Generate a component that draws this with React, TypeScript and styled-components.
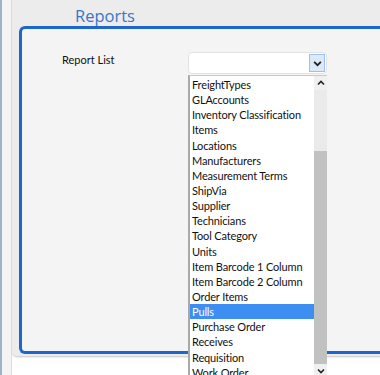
import React from 'react';
import styled, { createGlobalStyle } from 'styled-components';

const reports = [
  'FreightTypes',
  'GLAccounts',
  'Inventory Classification',
  'Items',
  'Locations',
  'Manufacturers',
  'Measurement Terms',
  'ShipVia',
  'Supplier',
  'Technicians',
  'Tool Category',
  'Units',
  'Item Barcode 1 Column',
  'Item Barcode 2 Column',
  'Order Items',
  'Pulls',
  'Purchase Order',
  'Receives',
  'Requisition',
  'Work Order',
];

const GlobalStyle = createGlobalStyle`
  html, body {
    margin: 0;
    padding: 0;
    background: #ffffff;
    overflow: hidden;
  }
  body {
    font-family: Lato, "Open Sans", sans-serif;
  }
`;

const Chevron: React.FC<{ up?: boolean; size?: number }> = ({ up, size = 8 }) => (
  <svg width={size} height={size} viewBox="0 0 8 8">
    <path
      d={up ? 'M1 5.5 L4 2.5 L7 5.5' : 'M1 2.5 L4 5.5 L7 2.5'}
      fill="none"
      stroke="#222"
      strokeWidth="1.6"
    />
  </svg>
);

const App: React.FC = () => {
  return (
    <>
      <GlobalStyle />
      <Screen>
        <SideStrip />
        <Gutter />
        <Main>
          <Panel>
            <Title>Reports</Title>
            <Frame>
              <FormRow>
                <Label>Report List</Label>
                <Field>
                  <Select>
                    <DropButton>
                      <Chevron size={9} />
                    </DropButton>
                  </Select>
                  <ListBox>
                    <Items>
                      {reports.map(r => (
                        <Item key={r} selected={r === 'Pulls'}>
                          {r}
                        </Item>
                      ))}
                    </Items>
                    <ScrollBar>
                      <ArrowCell>
                        <Chevron up />
                      </ArrowCell>
                      <Track>
                        <Thumb />
                      </Track>
                      <ArrowCell bottom>
                        <Chevron />
                      </ArrowCell>
                    </ScrollBar>
                  </ListBox>
                </Field>
              </FormRow>
            </Frame>
          </Panel>
        </Main>
      </Screen>
    </>
  );
};

export default App;

const Screen = styled.div`
  display: flex;
  width: 380px;
  height: 375px;
  overflow: hidden;
`;

const SideStrip = styled.div`
  width: 2px;
  flex-shrink: 0;
  background: #9fb3c6;
`;

const Gutter = styled.div`
  width: 9px;
  flex-shrink: 0;
  background: #f4f4f4;
  border-right: 1px solid #dcdcdc;
`;

const Main = styled.div`
  flex: 1;
  display: flex;
  flex-direction: column;
`;

const Panel = styled.div`
  height: 357px;
  background: #ececec;
  border-bottom: 1px solid #d6d6d6;
  border-bottom-left-radius: 5px;
  box-shadow: 0 1px 1px rgba(0, 0, 0, 0.08);
  display: flex;
  flex-direction: column;
  padding: 0 0 0 7px;
  box-sizing: border-box;
`;

const Title = styled.div`
  height: 26px;
  padding-left: 56px;
  font-family: "Open Sans", sans-serif;
  font-size: 16.5px;
  line-height: 31px;
  color: #3a76c6;
  overflow: hidden;
`;

const Frame = styled.div`
  width: 380px;
  height: 328px;
  box-sizing: border-box;
  border: 3px solid #1c66cd;
  border-right: none;
  border-radius: 6px 0 0 6px;
  background: #f4f4f4;
`;

const FormRow = styled.div`
  display: flex;
  padding-top: 24px;
`;

const Label = styled.div`
  width: 126px;
  padding-left: 40px;
  font-size: 11px;
  color: #111;
  line-height: 14px;
`;

const Field = styled.div`
  position: relative;
  width: 139px;
  margin-top: -1px;
`;

const Select = styled.div`
  height: 22px;
  box-sizing: border-box;
  background: #ffffff;
  border: 1px solid #e2e2e2;
  border-radius: 4px;
  display: flex;
  justify-content: flex-end;
  align-items: center;
  padding-right: 1px;
`;

const DropButton = styled.div`
  width: 16px;
  height: 18px;
  box-sizing: border-box;
  background: #dbe9f8;
  border: 1px solid #9cc2ec;
  display: flex;
  align-items: center;
  justify-content: center;
`;

const ListBox = styled.div`
  position: absolute;
  top: calc(100% + 1px);
  left: 0;
  width: 139px;
  height: 305px;
  box-sizing: border-box;
  display: flex;
  background: #ffffff;
  border-left: 2px solid #a9a9a9;
  border-top: 1px solid #c8c8c8;
  z-index: 10;
`;

const Items = styled.div`
  flex: 1;
  padding-top: 1px;
`;

const Item = styled.div<{ selected?: boolean }>`
  height: 15.15px;
  line-height: 16px;
  padding-left: 2px;
  font-size: 11px;
  letter-spacing: -0.15px;
  white-space: nowrap;
  color: ${p => (p.selected ? '#ffffff' : '#111111')};
  background: ${p => (p.selected ? '#3d8ef2' : 'transparent')};
`;

const ScrollBar = styled.div`
  width: 13px;
  display: flex;
  flex-direction: column;
  background: #eaeaea;
`;

const ArrowCell = styled.div<{ bottom?: boolean }>`
  height: ${p => (p.bottom ? '16px' : '15px')};
  display: flex;
  align-items: ${p => (p.bottom ? 'flex-start' : 'center')};
  padding-top: ${p => (p.bottom ? '3px' : '0')};
  box-sizing: border-box;
  justify-content: center;
  background: #f0f0f0;
`;

const Track = styled.div`
  flex: 1;
  display: flex;
  flex-direction: column;
  padding-top: 61px;
`;

const Thumb = styled.div`
  height: 213px;
  background: #c1c1c1;
`;
